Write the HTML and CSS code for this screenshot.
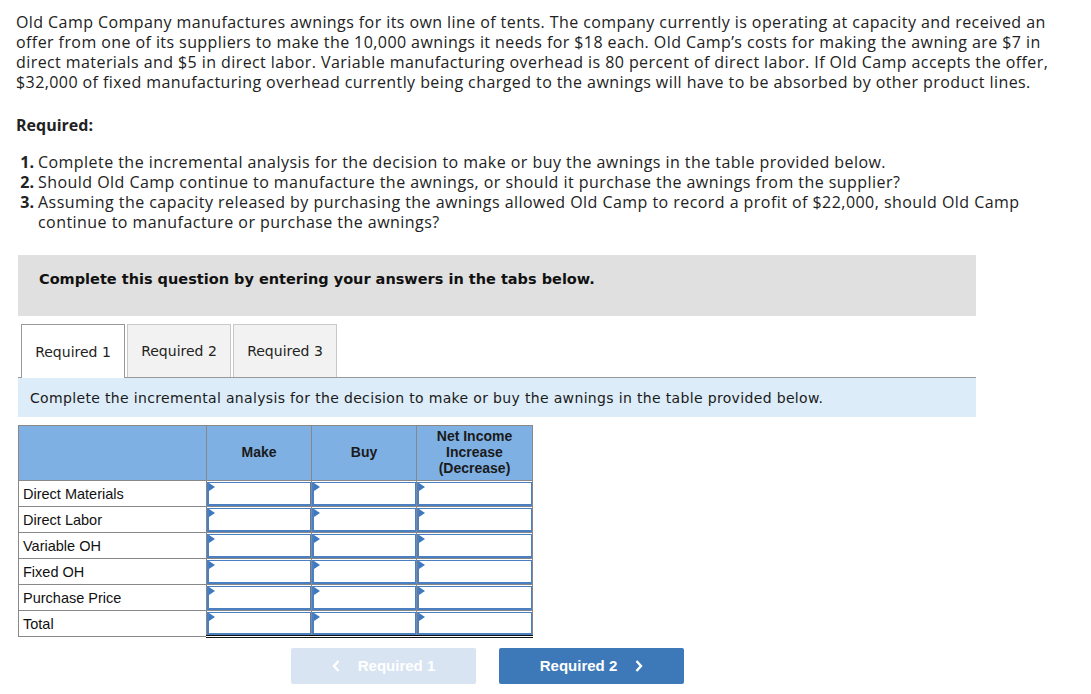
FILE: index.html
```html
<!DOCTYPE html>
<html>
<head>
<meta charset="utf-8">
<link rel="stylesheet" href="styles.css">
</head>
<body>
<div class="page">
  <p class="intro">Old Camp Company manufactures awnings for its own line of tents. The company currently is operating at capacity and received an<br>offer from one of its suppliers to make the 10,000 awnings it needs for $18 each. Old Camp’s costs for making the awning are $7 in<br>direct materials and $5 in direct labor. Variable manufacturing overhead is 80 percent of direct labor. If Old Camp accepts the offer,<br>$32,000 of fixed manufacturing overhead currently being charged to the awnings will have to be absorbed by other product lines.</p>
  <p class="req-title">Required:</p>
  <ol class="req-list">
    <li><span class="num">1.</span><span>Complete the incremental analysis for the decision to make or buy the awnings in the table provided below.</span></li>
    <li><span class="num">2.</span><span>Should Old Camp continue to manufacture the awnings, or should it purchase the awnings from the supplier?</span></li>
    <li><span class="num">3.</span><span>Assuming the capacity released by purchasing the awnings allowed Old Camp to record a profit of $22,000, should Old Camp<br>continue to manufacture or purchase the awnings?</span></li>
  </ol>

  <div class="question-box">Complete this question by entering your answers in the tabs below.</div>

  <div class="tabs">
    <div class="tab active">Required 1</div>
    <div class="tab">Required 2</div>
    <div class="tab">Required 3</div>
  </div>
  <div class="instruction">Complete the incremental analysis for the decision to make or buy the awnings in the table provided below.</div>

  <table class="grid">
    <thead>
      <tr>
        <th class="c-label"></th>
        <th class="c-make">Make</th>
        <th class="c-buy">Buy</th>
        <th class="c-net">Net Income<br>Increase<br>(Decrease)</th>
      </tr>
    </thead>
    <tbody>
      <tr><td class="label">Direct Materials</td><td class="cell"><div class="inp"></div></td><td class="cell"><div class="inp"></div></td><td class="cell"><div class="inp"></div></td></tr>
      <tr><td class="label">Direct Labor</td><td class="cell"><div class="inp"></div></td><td class="cell"><div class="inp"></div></td><td class="cell"><div class="inp"></div></td></tr>
      <tr><td class="label">Variable OH</td><td class="cell"><div class="inp"></div></td><td class="cell"><div class="inp"></div></td><td class="cell"><div class="inp"></div></td></tr>
      <tr><td class="label">Fixed OH</td><td class="cell"><div class="inp"></div></td><td class="cell"><div class="inp"></div></td><td class="cell"><div class="inp"></div></td></tr>
      <tr><td class="label">Purchase Price</td><td class="cell"><div class="inp"></div></td><td class="cell"><div class="inp"></div></td><td class="cell"><div class="inp"></div></td></tr>
      <tr class="total"><td class="label">Total</td><td class="cell"><div class="inp"></div></td><td class="cell"><div class="inp"></div></td><td class="cell"><div class="inp"></div></td></tr>
    </tbody>
  </table>

  <div class="nav">
    <div class="btn prev"><svg class="chev" width="8" height="12" viewBox="0 0 8 12"><path d="M6.5 1 L2 6 L6.5 11" fill="none" stroke="#fff" stroke-width="2.4"/></svg>Required 1</div>
    <div class="btn next">Required 2<svg class="chev" width="8" height="12" viewBox="0 0 8 12"><path d="M1.5 1 L6 6 L1.5 11" fill="none" stroke="#fff" stroke-width="2.4"/></svg></div>
  </div>
</div>
</body>
</html>
```

FILE: styles.css
```css
* { box-sizing: border-box; }
body {
  margin: 0;
  background: #fff;
  color: #1a1a1a;
}
.page {
  padding: 12px 0 0 16px;
  font-family: "Open Sans", Lato, sans-serif;
}
.intro {
  margin: 0;
  font-size: 16px;
  line-height: 20px;
  letter-spacing: 0.42px;
  color: #222;
}
.req-title {
  margin: 23px 0 0 0;
  font-size: 16px;
  line-height: 20px;
  font-weight: bold;
  color: #222;
}
.req-list {
  list-style: none;
  margin: 17px 0 0 0;
  padding: 0;
  font-size: 16px;
  line-height: 20px;
  letter-spacing: 0.45px;
  color: #222;
}
.req-list li {
  display: flex;
}
.num {
  font-weight: bold;
  width: 22px;
  text-align: right;
  padding-right: 4px;
  letter-spacing: 0;
  flex: none;
}
.question-box {
  margin: 23px 0 0 2px;
  width: 958px;
  height: 61px;
  background: #e0e0e0;
  padding: 16px 0 0 21px;
  font-family: Verdana, "DejaVu Sans", sans-serif;
  font-weight: bold;
  font-size: 14.5px;
  color: #111;
}
.tabs {
  display: flex;
  gap: 2px;
  margin: 8px 0 0 5px;
  height: 53px;
  align-items: flex-end;
}
.tab {
  width: 104px;
  height: 53px;
  border: 1px solid #c9c9c9;
  border-bottom: none;
  background: #f2f2f2;
  font-family: Verdana, "DejaVu Sans", sans-serif;
  font-size: 14px;
  color: #222;
  display: flex;
  align-items: center;
  justify-content: center;
}
.tab.active {
  background: #fff;
  border-color: #999;
  height: 54px;
  margin-bottom: -1px;
  position: relative;
}
.instruction {
  margin-left: 2px;
  width: 958px;
  height: 40px;
  border-top: 1px solid #999;
  background: #dcecf8;
  padding: 12px 0 0 12px;
  font-family: Verdana, "DejaVu Sans", sans-serif;
  font-size: 14px;
  letter-spacing: 0.34px;
  color: #1a1a1a;
}
.grid {
  margin: 8px 0 0 2px;
  border-collapse: collapse;
  font-family: Arial, "Liberation Sans", sans-serif;
  font-size: 14px;
  color: #111;
}
.grid th {
  background: #7eb0e4;
  border: 1px solid #888;
  height: 55px;
  font-weight: bold;
  font-size: 14px;
  line-height: 16px;
  color: #1a1a1a;
  padding: 0 0 2px 0;
  vertical-align: middle;
}
.c-label { width: 188px; }
.c-make { width: 105px; }
.c-buy { width: 105px; }
.c-net { width: 116px; }
.grid td {
  border: 1px solid #888;
  height: 25px;
  padding: 0;
}
.grid td.label {
  padding-left: 4px;
  font-size: 14.5px;
}
.grid td.cell {
  padding: 1px 0 0 0;
  vertical-align: top;
}
.inp {
  position: relative;
  height: 24px;
  border: 2px solid #4a80c2;
  border-top-width: 1px;
  border-right-width: 1px;
  border-bottom-width: 2px;
  background: #fff;
}
.inp::before {
  content: "";
  position: absolute;
  left: 0;
  top: 0;
  border-top: 4px solid transparent;
  border-bottom: 4px solid transparent;
  border-left: 6px solid #3d78c0;
}
.total td.cell {
  border-top: 1px solid #111;
  border-bottom: 3px double #111;
}
.total td.cell .inp {
  height: 23px;
}
.nav {
  display: flex;
  gap: 23px;
  margin: 10px 0 0 275px;
}
.btn {
  width: 185px;
  height: 36px;
  border-radius: 2px;
  font-family: Arial, "Liberation Sans", sans-serif;
  font-weight: bold;
  font-size: 15px;
  line-height: 17px;
  padding-bottom: 2px;
  color: #fff;
  display: flex;
  align-items: center;
  justify-content: center;
}
.btn.prev { background: #d8e4f2; }
.btn.next { background: #3d78b8; }
.chev {
  flex: none;
  margin-top: 2px;
}
.prev .chev { margin-right: 18px; }
.next .chev { margin-left: 18px; }
```
